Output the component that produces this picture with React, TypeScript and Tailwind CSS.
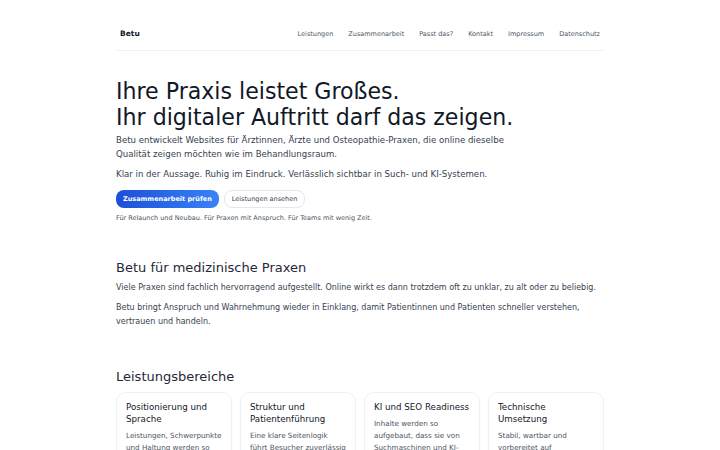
import React from "react";

const cards = [
  {
    t: "Positionierung und Sprache",
    b: "Leistungen, Schwerpunkte und Haltung werden so formuliert, dass sie sofort verstanden werden.",
  },
  {
    t: "Struktur und Patientenführung",
    b: "Eine klare Seitenlogik führt Besucher zuverlässig zum nächsten Schritt.",
  },
  {
    t: "KI und SEO Readiness",
    b: "Inhalte werden so aufgebaut, dass sie von Suchmaschinen und KI-Systemen verstanden werden.",
  },
  {
    t: "Technische Umsetzung",
    b: "Stabil, wartbar und vorbereitet auf Erweiterungen, ohne unnötige Komplexität.",
  },
];

export default function App() {
  return (
    <div
      className="min-h-screen bg-white text-[#111827]"
      style={{ fontFamily: '"DejaVu Sans", "Noto Sans", sans-serif' }}
    >
      <div className="mx-auto w-[488px]">
        <header className="flex items-center justify-between border-b border-[#eef0f3] px-[4px] pt-[30px] pb-[12px] leading-[8px]">
          <div className="text-[7.5px] font-bold text-[#111827]">Betu</div>
          <nav className="flex gap-[15px] text-[6.5px] text-[#4b5563]">
            <span>Leistungen</span>
            <span>Zusammenarbeit</span>
            <span>Passt das?</span>
            <span>Kontakt</span>
            <span>Impressum</span>
            <span>Datenschutz</span>
          </nav>
        </header>

        <section className="pt-[27px]">
          <h1 className="text-[22.1px] leading-[26px] font-normal text-[#111827]">
            Ihre Praxis leistet Großes.
            <br />
            Ihr digitaler Auftritt darf das zeigen.
          </h1>
          <p className="mt-[3px] text-[8.6px] leading-[14px] text-[#374151]">
            Betu entwickelt Websites für Ärztinnen, Ärzte und Osteopathie-Praxen, die online dieselbe
            <br />
            Qualität zeigen möchten wie im Behandlungsraum.
          </p>
          <p className="mt-[6px] text-[8.6px] leading-[14px] text-[#374151]">
            Klar in der Aussage. Ruhig im Eindruck. Verlässlich sichtbar in Such- und KI-Systemen.
          </p>
          <div className="mt-[9px] flex gap-[5px]">
            <button className="h-[18px] rounded-[8px] bg-gradient-to-r from-[#1d4ed8] to-[#3b82f6] px-[7px] text-[6.5px] leading-[8px] font-bold text-white">
              Zusammenarbeit prüfen
            </button>
            <button className="h-[18px] rounded-[8px] border border-[#e5e7eb] bg-white px-[7px] text-[6.5px] leading-[8px] text-[#374151]">
              Leistungen ansehen
            </button>
          </div>
          <p className="mt-[5px] text-[6.5px] leading-[10px] text-[#4b5563]">
            Für Relaunch und Neubau. Für Praxen mit Anspruch. Für Teams mit wenig Zeit.
          </p>
        </section>

        <section className="pt-[37px]">
          <h2 className="text-[13px] leading-[16px] font-normal text-[#1f2937]">
            Betu für medizinische Praxen
          </h2>
          <p className="mt-[5px] text-[8px] leading-[14px] text-[#374151]">
            Viele Praxen sind fachlich hervorragend aufgestellt. Online wirkt es dann trotzdem oft zu unklar, zu alt oder zu beliebig.
          </p>
          <p className="mt-[6px] text-[8px] leading-[14px] text-[#374151]">
            Betu bringt Anspruch und Wahrnehmung wieder in Einklang, damit Patientinnen und Patienten schneller verstehen,
            <br />
            vertrauen und handeln.
          </p>
        </section>

        <section className="pt-[40px]">
          <h2 className="text-[13px] leading-[16px] font-normal text-[#1f2937]">
            Leistungsbereiche
          </h2>
          <div className="mt-[7px] grid grid-cols-4 gap-[8px]">
            {cards.map((c) => (
              <div
                key={c.t}
                className="rounded-[10px] border border-[#eef0f3] bg-white pl-[9px] pr-[8px] pt-[8px] pb-[10px] shadow-[0_1px_2px_rgba(0,0,0,0.03)]"
              >
                <div className="text-[8.7px] leading-[12px] text-[#111827]">{c.t}</div>
                <div className="mt-[5px] text-[7.2px] leading-[12px] text-[#4b5563]">{c.b}</div>
              </div>
            ))}
          </div>
        </section>
      </div>
    </div>
  );
}
